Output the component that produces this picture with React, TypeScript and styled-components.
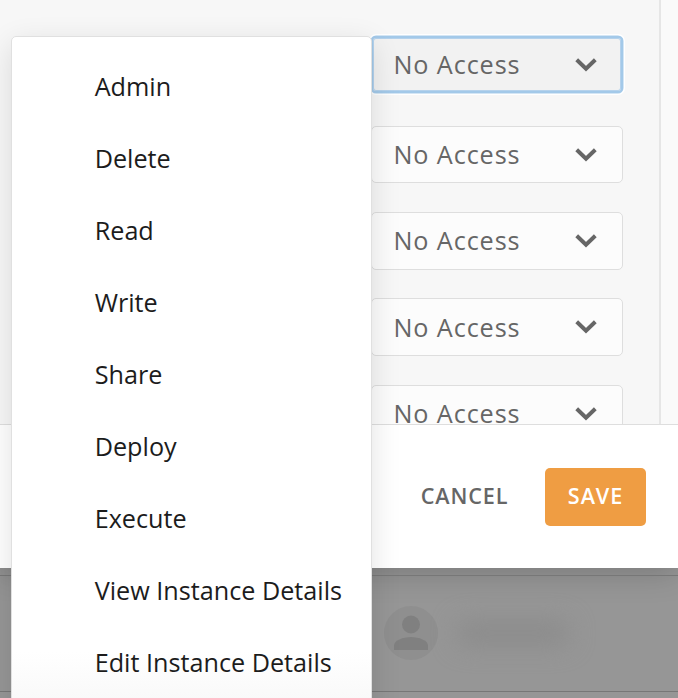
import React from "react";
import styled, { createGlobalStyle, css } from "styled-components";

const GlobalStyle = createGlobalStyle`
  *, *::before, *::after { box-sizing: border-box; }
  body { margin: 0; overflow: hidden; font-family: "Open Sans", sans-serif; }
  button { font: inherit; cursor: pointer; }
`;

const Page = styled.div`
  position: relative;
  display: flex;
  flex-direction: column;
  width: 678px;
  height: 698px;
  overflow: hidden;
  background: #969696;
`;

const Dialog = styled.section`
  flex: none;
  display: flex;
  flex-direction: column;
  height: 568px;
  background: #fff;
  box-shadow: 0 4px 30px rgba(0, 0, 0, 0.2);
`;

const DialogBody = styled.div`
  display: flex;
  height: 424px;
  overflow: hidden;
  background: #f7f7f7;
`;

const SelectColumn = styled.div`
  display: flex;
  flex: 1;
  flex-direction: column;
  align-items: flex-end;
  padding: 36px 36px 0 0;
`;

const Gutter = styled.div`
  width: 19px;
  border-left: 2px solid #e6e6e6;
  background: #fafafa;
`;

const Select = styled.button<{ $focused?: boolean; $height: number; $gap: number }>`
  flex: none;
  display: flex;
  align-items: center;
  justify-content: space-between;
  width: 252px;
  height: ${(p) => p.$height}px;
  margin-bottom: ${(p) => p.$gap}px;
  padding: 0 25.5px 0 21.5px;
  border: 1px solid #dedede;
  border-radius: 5px;
  background: #fcfcfc;
  color: #666;
  font-size: 25.2px;
  letter-spacing: 0.9px;
  ${(p) =>
    p.$focused &&
    css`
      border: 2px solid #a3c9e9;
      padding: 0 24.5px 0 20.5px;
      background: #f2f2f2;
      box-shadow: inset 0 0 0 1px #b5d2ec, 0 0 0 0.5px #a9cdeb, 0 0 0 2px #fff;
    `}
`;

const SelectLabel = styled.span<{ $height: number }>`
  height: ${(p) => p.$height}px;
  line-height: 36px;
`;

const Footer = styled.footer`
  display: flex;
  flex: 1;
  align-items: center;
  justify-content: flex-end;
  gap: 14px;
  padding: 0 32px 0 0;
  border-top: 1px solid #dedede;
`;

const FooterButton = styled.button<{ $primary?: boolean }>`
  width: ${(p) => (p.$primary ? 101 : 133)}px;
  height: 58px;
  padding: 0 0 3px;
  border: 0;
  border-radius: 5px;
  background: ${(p) => (p.$primary ? "#ef9d43" : "transparent")};
  color: ${(p) => (p.$primary ? "#fff" : "#666")};
  font-size: 21.6px;
  font-weight: 600;
  letter-spacing: 0.9px;
`;

const UserRow = styled.div`
  display: flex;
  align-items: center;
  gap: 13px;
  height: 117px;
  margin-top: 7px;
  padding: 0 0 2px 384px;
  border-top: 1px solid #777;
  border-bottom: 1px solid #777;
`;

const Avatar = styled.span`
  display: flex;
  align-items: center;
  justify-content: center;
  width: 54px;
  height: 54px;
  border-radius: 50%;
  background: #8f8f8f;
`;

const NameBlur = styled.span`
  width: 112px;
  height: 24px;
  margin: 0 0 0 6px;
  border-radius: 10px;
  background: #8b8b8b;
  filter: blur(12px);
`;

const Menu = styled.ul`
  position: absolute;
  top: 36px;
  left: 11px;
  width: 361px;
  height: 700px;
  margin: 0;
  padding: 13px 0;
  border: 1px solid #e0e0e0;
  border-radius: 5px;
  background: linear-gradient(#fff 615px, #f9f9f9 662px);
  box-shadow: 0 8px 30px rgba(0, 0, 0, 0.12);
  list-style: none;
`;

const MenuItem = styled.li`
  height: 72px;
  padding-left: 82.7px;
  color: #1c1c1c;
  font-size: 25.2px;
  line-height: 72px;
  white-space: nowrap;
`;

const Chevron = () => (
  <svg width="22" height="14" viewBox="0 0 22 14" fill="none" stroke="#666" strokeWidth="4">
    <path d="M1.7 1.8 11 10.7l9.3-8.9" />
  </svg>
);

const Person = () => (
  <svg width="34" height="36" viewBox="0 0 34 36" fill="#808080">
    <circle cx="17" cy="9.5" r="9" />
    <path d="M0 35v-4.5C0 25.5 9 22 17 22s17 3.5 17 8.5V35z" />
  </svg>
);

const selects = [
  { height: 57, gap: 33, label: 38, focused: true },
  { height: 57, gap: 29, label: 38 },
  { height: 58, gap: 28, label: 38 },
  { height: 58, gap: 29, label: 36 },
  { height: 57, gap: 29, label: 38 },
];

const permissions = [
  "Admin",
  "Delete",
  "Read",
  "Write",
  "Share",
  "Deploy",
  "Execute",
  "View Instance Details",
  "Edit Instance Details",
];

export default function App() {
  return (
    <Page>
      <GlobalStyle />
      <Dialog>
        <DialogBody>
          <SelectColumn>
            {selects.map((s, i) => (
              <Select key={i} $height={s.height} $gap={s.gap} $focused={s.focused}>
                <SelectLabel $height={s.label}>No Access</SelectLabel>
                <Chevron />
              </Select>
            ))}
          </SelectColumn>
          <Gutter />
        </DialogBody>
        <Footer>
          <FooterButton>CANCEL</FooterButton>
          <FooterButton $primary>SAVE</FooterButton>
        </Footer>
      </Dialog>
      <UserRow>
        <Avatar>
          <Person />
        </Avatar>
        <NameBlur />
      </UserRow>
      <Menu>
        {permissions.map((name) => (
          <MenuItem key={name}>{name}</MenuItem>
        ))}
      </Menu>
    </Page>
  );
}
